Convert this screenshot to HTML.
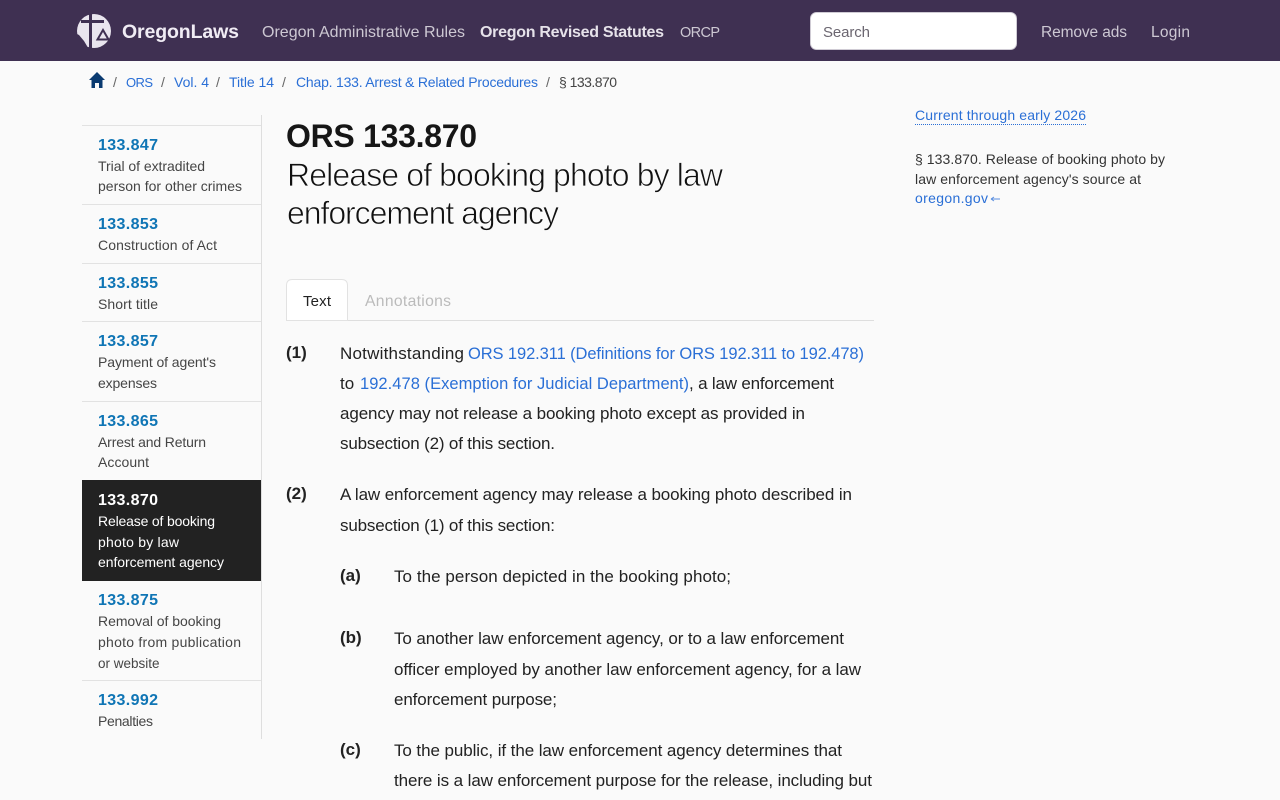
<!DOCTYPE html>
<html lang="en">
<head>
<meta charset="utf-8">
<title>ORS 133.870 - Release of booking photo by law enforcement agency</title>
<style>
html,body{margin:0;padding:0;width:1280px;height:800px;overflow:hidden;background:#fafafa}
svg{display:block}
text{font-family:"Liberation Sans",Arial,sans-serif;white-space:pre}
.nav{font-size:16px;fill:#cdc8d3}
.crumb{font-size:14px;fill:#2a6fd6}
.sep{font-size:14px;fill:#666}
.num{font-size:16px;font-weight:700;fill:#0f75b5}
.sd{font-size:14px;fill:#454545}
.on{fill:#fff}
.b{font-size:17px;fill:#222}
.l{font-size:16.5px;fill:#2a6fd6}
.m{font-size:17px;font-weight:700;fill:#222}
.r{font-size:14px;fill:#333}
.rl{font-size:14px;fill:#2a6fd6}
.sub{font-size:32px;fill:#111;stroke:#fafafa;stroke-width:.75px}
</style>
</head>
<body>
<svg width="1280" height="800" viewBox="0 0 1280 800" xmlns="http://www.w3.org/2000/svg">
<rect width="1280" height="800" fill="#fafafa"/>

<!-- Header -->
<rect width="1280" height="61" fill="#3f3052"/>
<circle cx="94" cy="31" r="17" fill="#e9e5ee"/>
<path d="M75 33L79 35L84 41L87 46L88 50L75 50Z" fill="#3f3052"/>
<path d="M81 21.500H104M90.500 12V48" stroke="#3f3052" stroke-width="3" fill="none"/>
<path d="M103 30L97.500 39.500H108.500Z" fill="none" stroke="#3f3052" stroke-width="2"/>
<text x="122" y="38" font-size="19.500" font-weight="700" fill="#f0ecf4" textLength="117">OregonLaws</text>
<text class="nav" x="262" y="37" textLength="203">Oregon Administrative Rules</text>
<text class="nav" x="480" y="37" textLength="184" font-weight="700" style="fill:#e6e2ea">Oregon Revised Statutes</text>
<text class="nav" style="font-size:14.500px" x="680" y="37" textLength="40">ORCP</text>
<rect x="810.500" y="12.500" width="206" height="37" rx="6" fill="#fff" stroke="#cfcbd4"/>
<text x="823" y="37" font-size="15" fill="#6b6670" textLength="47">Search</text>
<text class="nav" style="font-size:15.500px" x="1041" y="37" textLength="86">Remove ads</text>
<text class="nav" style="font-size:15.500px" x="1151" y="37" textLength="39">Login</text>

<!-- Breadcrumb -->
<path d="M97 72L89 80H91.500V88H95V83H99V88H102.500V80H105Z" fill="#0a3a70"/>
<text class="sep" x="113" y="87">/</text>
<a href="#"><text class="crumb" style="font-size:13px" x="126" y="87" textLength="27">ORS</text></a>
<text class="sep" x="161" y="87">/</text>
<a href="#"><text class="crumb" x="174" y="87" textLength="35">Vol. 4</text></a>
<text class="sep" x="216" y="87">/</text>
<a href="#"><text class="crumb" x="229" y="87" textLength="45">Title 14</text></a>
<text class="sep" x="282" y="87">/</text>
<a href="#"><text class="crumb" x="296" y="87" textLength="242">Chap. 133. Arrest &amp; Related Procedures</text></a>
<text class="sep" x="546" y="87">/</text>
<text class="crumb" style="fill:#444" x="559" y="87" textLength="58">§ 133.870</text>

<!-- Sidebar -->
<path d="M261.500 115V739" stroke="#dedede"/>
<g stroke="#e2e2e2">
<path d="M82 125.500H261M82 204.500H261M82 263.500H261M82 321.500H261M82 401.500H261M82 680.500H261"/>
</g>
<rect x="82" y="480" width="179" height="101" fill="#222"/>

<text class="num" x="98" y="150" textLength="60">133.847</text>
<text class="sd" x="98" y="171" textLength="107">Trial of extradited</text>
<text class="sd" x="98" y="191" textLength="144">person for other crimes</text>
<text class="num" x="98" y="229" textLength="60">133.853</text>
<text class="sd" x="98" y="250" textLength="119">Construction of Act</text>
<text class="num" x="98" y="288" textLength="60">133.855</text>
<text class="sd" x="98" y="309" textLength="60">Short title</text>
<text class="num" x="98" y="346" textLength="60">133.857</text>
<text class="sd" x="98" y="367" textLength="118">Payment of agent's</text>
<text class="sd" x="98" y="388" textLength="59">expenses</text>
<text class="num" x="98" y="426" textLength="60">133.865</text>
<text class="sd" x="98" y="447" textLength="108">Arrest and Return</text>
<text class="sd" x="98" y="467" textLength="51">Account</text>
<text class="num on" x="98" y="505" textLength="60">133.870</text>
<text class="sd on" x="98" y="526" textLength="117">Release of booking</text>
<text class="sd on" x="98" y="547" textLength="81">photo by law</text>
<text class="sd on" x="98" y="567" textLength="126">enforcement agency</text>
<text class="num" x="98" y="605" textLength="60">133.875</text>
<text class="sd" x="98" y="626" textLength="123">Removal of booking</text>
<text class="sd" x="98" y="647" textLength="143">photo from publication</text>
<text class="sd" style="font-size:13.500px" x="98" y="668">or website</text>
<text class="num" x="98" y="705" textLength="60">133.992</text>
<text class="sd" x="98" y="726" textLength="55">Penalties</text>

<!-- Title -->
<text x="286" y="147" font-size="32" font-weight="700" fill="#161616" textLength="191">ORS 133.870</text>
<text class="sub" x="287" y="186" textLength="436">Release of booking photo by law</text>
<text class="sub" x="287" y="224" textLength="272">enforcement agency</text>

<!-- Tabs -->
<path d="M286.500 320.500V285.500Q286.500 279.500 292.500 279.500H341.500Q347.500 279.500 347.500 285.500V320.500Z" fill="#fff" stroke="#e2e2e2"/>
<path d="M348 320.500H874" stroke="#dedede"/>
<text x="303" y="306" font-size="15" fill="#222" textLength="28">Text</text>
<text x="365" y="306" font-size="15.700" fill="#bbb" textLength="86">Annotations</text>

<!-- Body -->
<text class="m" x="286" y="358">(1)</text>
<text class="b" x="340" y="359" textLength="124">Notwithstanding</text>
<a href="#"><text class="l" x="468" y="359" textLength="396">ORS 192.311 (Definitions for ORS 192.311 to 192.478)</text></a>
<text class="b" x="340" y="389">to</text>
<a href="#"><text class="l" x="360" y="389" textLength="329">192.478 (Exemption for Judicial Department)</text></a>
<text class="b" x="689" y="389" textLength="145">, a law enforcement</text>
<text class="b" x="340" y="419" textLength="465">agency may not release a booking photo except as provided in</text>
<text class="b" x="340" y="449" textLength="215">subsection (2) of this section.</text>

<text class="m" x="286" y="499">(2)</text>
<text class="b" x="340" y="500" textLength="512">A law enforcement agency may release a booking photo described in</text>
<text class="b" x="340" y="531" textLength="215">subsection (1) of this section:</text>

<text class="m" x="340" y="581">(a)</text>
<text class="b" x="394" y="582" textLength="337">To the person depicted in the booking photo;</text>

<text class="m" x="340" y="643">(b)</text>
<text class="b" x="394" y="644" textLength="450">To another law enforcement agency, or to a law enforcement</text>
<text class="b" x="394" y="675" textLength="467">officer employed by another law enforcement agency, for a law</text>
<text class="b" x="394" y="705" textLength="163">enforcement purpose;</text>

<text class="m" x="340" y="755">(c)</text>
<text class="b" x="394" y="756" textLength="448">To the public, if the law enforcement agency determines that</text>
<text class="b" x="394" y="786" textLength="478">there is a law enforcement purpose for the release, including but</text>

<!-- Right column -->
<a href="#"><text class="rl" x="915" y="120" textLength="171">Current through early 2026</text></a>
<path d="M915 124.500H1087" stroke="#2a6fd6" stroke-dasharray="1 1"/>
<text class="r" x="915" y="164" textLength="250">§ 133.870. Release of booking photo by</text>
<text class="r" x="915" y="184" textLength="226">law enforcement agency's source at</text>
<a href="#"><text class="rl" x="915" y="203" textLength="73">oregon.gov</text></a>
<path d="M991 199H1000M991 199L994 197M991 199L994 201" stroke="#5a8fe0" fill="none"/>
</svg>
</body>
</html>
